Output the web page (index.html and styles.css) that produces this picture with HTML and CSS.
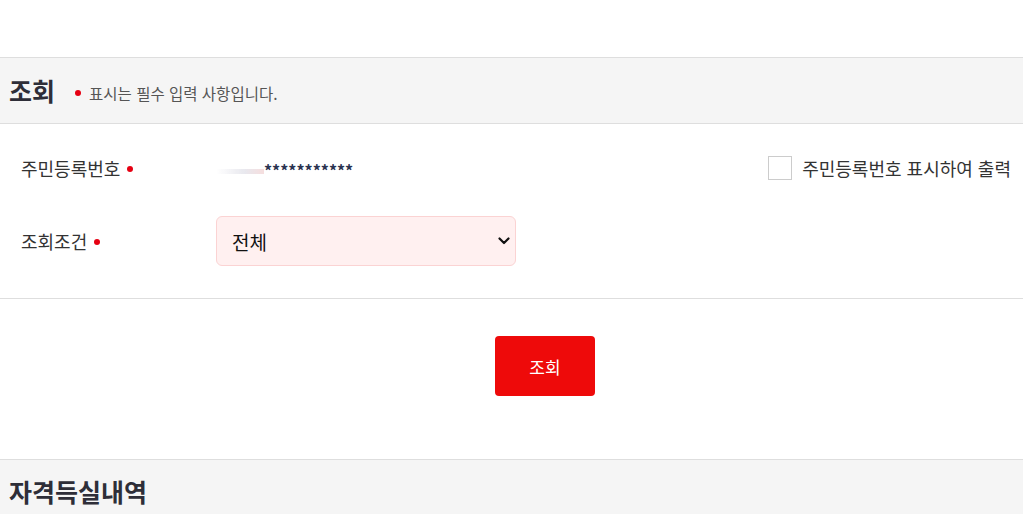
FILE: index.html
```html
<!DOCTYPE html>
<html lang="ko">
<head>
<meta charset="utf-8">
<title>조회</title>
<link rel="stylesheet" href="styles.css">
</head>
<body>
<div class="page">
  <div class="section-head">
    <h2 class="section-title">조회</h2>
    <p class="required-note"><span class="req-dot"></span>표시는 필수 입력 사항입니다.</p>
  </div>
  <div class="form">
    <div class="form-row">
      <div class="label">주민등록번호<span class="req-dot"></span></div>
      <div class="field">
        <span class="rrn-mask"></span><span class="rrn-stars">***********</span>
      </div>
      <label class="check">
        <span class="check-box"></span>
        <span class="check-text">주민등록번호 표시하여 출력</span>
      </label>
    </div>
    <div class="form-row">
      <div class="label">조회조건<span class="req-dot"></span></div>
      <div class="field">
        <div class="select">
          <span class="select-text">전체</span>
          <svg class="select-arrow" width="12" height="8" viewBox="0 0 12 8"><path d="M1.5 1.5 L6 6 L10.5 1.5" fill="none" stroke="#111" stroke-width="2.2" stroke-linecap="round" stroke-linejoin="round"/></svg>
        </div>
      </div>
    </div>
  </div>
  <div class="actions">
    <button class="btn-primary" type="button">조회</button>
  </div>
  <div class="section-head section-head-last">
    <h2 class="section-title">자격득실내역</h2>
  </div>
</div>
</body>
</html>
```
FILE: styles.css
```css
* { box-sizing: border-box; }
html, body { margin: 0; padding: 0; background: #fff; }
body {
  font-family: "Noto Sans CJK KR", "Noto Sans", sans-serif;
  color: #333;
  overflow: hidden;
}
.page { padding-top: 57px; }
.section-head {
  display: flex;
  align-items: center;
  height: 67px;
  background: #f5f5f5;
  border-top: 1px solid #dedede;
  border-bottom: 1px solid #dedede;
  padding-left: 9px;
}
.section-title {
  margin: 0;
  font-size: 25px;
  font-weight: 700;
  color: #2e2e38;
  line-height: 1;
}
.required-note {
  margin: 4px 0 0 20px;
  font-size: 15.5px;
  color: #555;
  display: flex;
  align-items: center;
}
.req-dot {
  display: inline-block;
  width: 6px;
  height: 6px;
  border-radius: 50%;
  background: #e60012;
  margin-right: 8px;
}
.label .req-dot { margin: 0 0 5px 7px; vertical-align: middle; }
.form {
  padding: 19px 12px 32px 21px;
  border-bottom: 1px solid #dedede;
}
.form-row {
  display: flex;
  align-items: center;
  min-height: 50px;
}
.form-row + .form-row { margin-top: 23px; }
.label {
  width: 195px;
  font-size: 18px;
  color: #333;
}
.field { flex: 1; display: flex; align-items: center; }
.rrn-mask {
  display: inline-block;
  width: 48px;
  height: 5px;
  margin-top: 6px;
  background: linear-gradient(90deg, rgba(230,230,235,0) 0%, #e8e8ee 60%, #f6dede 100%);
  filter: blur(0.6px);
}
.rrn-stars {
  font-size: 16px;
  font-weight: 700;
  color: #2b3350;
  line-height: 1;
  margin-top: 4px;
}
.check { display: flex; align-items: center; gap: 10px; cursor: pointer; }
.check-box {
  width: 24px;
  height: 24px;
  border: 1px solid #ccc;
  background: #fff;
}
.check-text { font-size: 18px; color: #333; }
.select {
  width: 300px;
  height: 50px;
  background: #fff0f0;
  border: 1px solid #fbd3d3;
  border-radius: 6px;
  display: flex;
  align-items: center;
  justify-content: space-between;
  padding: 0 5px 0 15px;
}
.select-text { font-size: 19px; color: #111; }
.actions {
  display: flex;
  justify-content: center;
  padding: 37px 0 63px 67px;
}
.btn-primary {
  width: 100px;
  height: 60px;
  border: 0;
  border-radius: 4px;
  background: #ee0a0a;
  color: #fff;
  font-family: inherit;
  font-size: 17px;
  cursor: pointer;
}
.section-head-last { border-bottom: 0; height: 60px; padding-top: 3px; }
```
